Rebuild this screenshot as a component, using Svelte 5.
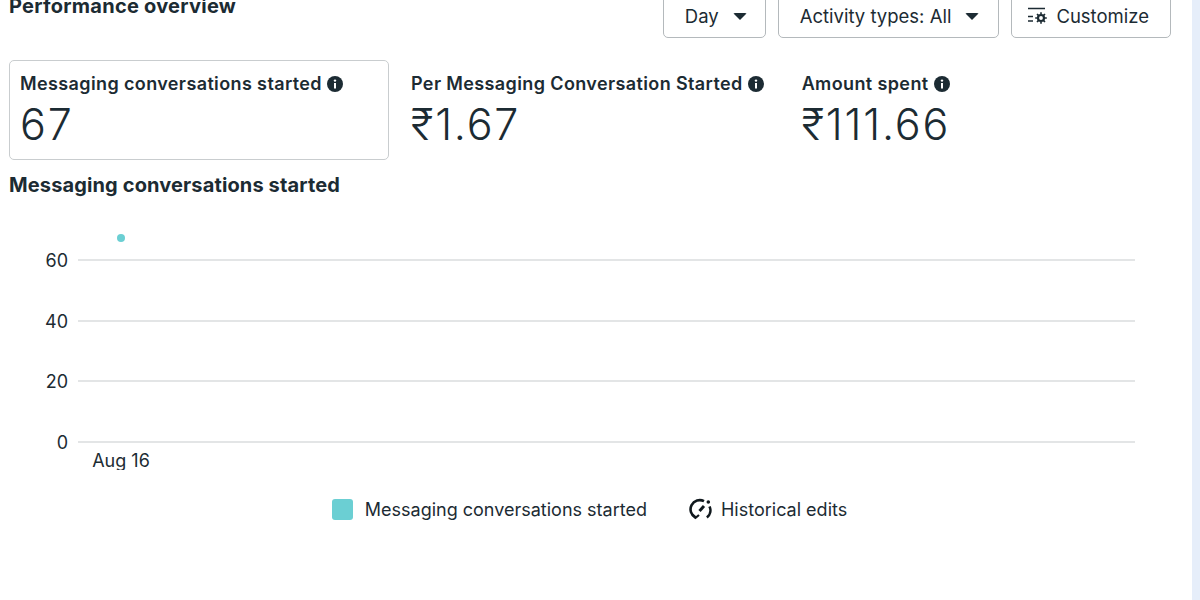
<script lang="ts">
  const metrics = [
    { label: 'Messaging conversations started', value: '67', selected: true },
    { label: 'Per Messaging Conversation Started', value: '₹1.67', selected: false },
    { label: 'Amount spent', value: '₹111.66', selected: false }
  ];

  const ticks = [
    { label: '60', y: 60 },
    { label: '40', y: 121 },
    { label: '20', y: 181 },
    { label: '0', y: 242 }
  ];
</script>

<div class="page">
  <main class="content">
    <header class="top">
      <h2>Performance overview</h2>
      <div class="actions">
        <button class="btn day">Day <span class="caret"></span></button>
        <button class="btn types">Activity types: All <span class="caret"></span></button>
        <button class="btn custom">
          <svg width="20" height="18" viewBox="0 0 20 18" fill="none" stroke="#1c2b33">
            <path d="M1 1.5h17M1 9.5h5M1 14h5" stroke-width="1.3" />
            <circle cx="14" cy="11" r="3" stroke-width="2.2" />
            <path d="M14 5.2v2M14 14.8v2M8.2 11h2M17.8 11h2M10 7l1.4 1.4M16.6 13.6l1.4 1.4M10 15l1.4-1.4M16.6 8.4L18 7" stroke-width="1.6" />
          </svg>
          Customize
        </button>
      </div>
    </header>

    <section class="metrics">
      {#each metrics as m}
        <div class="metric" class:selected={m.selected}>
          <div class="label">
            {m.label}
            <svg class="info" width="16" height="16" viewBox="0 0 16 16">
              <circle cx="8" cy="8" r="8" fill="#1c2b33" />
              <rect x="7" y="7" width="2" height="5.5" fill="#fff" />
              <circle cx="8" cy="4.6" r="1.2" fill="#fff" />
            </svg>
          </div>
          <div class="value">{m.value}</div>
        </div>
      {/each}
    </section>

    <h3>Messaging conversations started</h3>

    <svg class="chart" width="1183" height="270" viewBox="0 0 1183 270">
      {#each ticks as t}
        <line x1="78" x2="1135" y1={t.y} y2={t.y} stroke="#c8cbcd" stroke-width="1.2" />
        <text x="68" y={t.y + 7} text-anchor="end">{t.label}</text>
      {/each}
      <circle cx="121" cy="38" r="4" fill="#6bcfd3" />
      <text x="121" y="267" text-anchor="middle">Aug 16</text>
    </svg>

    <footer class="legend">
      <span class="item first"><span class="swatch"></span>Messaging conversations started</span>
      <span class="item">
        <svg width="24" height="24" viewBox="0 0 24 24" fill="none" stroke="#10181d" stroke-width="2.6">
          <path d="M6.5 20.5A9 9 0 0 1 15 4.2" />
          <path d="M20.5 9.5a9 9 0 0 1-2.6 11" />
          <path d="M3.4 17.4l3.2 3.4 3.4-2.8" stroke-width="2.2" />
          <path d="M10.5 14l4.5-5" stroke-width="3" />
          <circle cx="19.3" cy="5" r="1.8" fill="#10181d" stroke="none" />
        </svg>
        Historical edits
      </span>
    </footer>
  </main>
  <aside class="strip"></aside>
</div>

<style>
  :global(body) {
    background: #fff;
    overflow: hidden;
  }

  .page {
    display: flex;
    height: 600px;
    overflow: hidden;
    font-family: Inter, "Liberation Sans", sans-serif;
    color: #1c2b33;
  }

  .content {
    flex: 1;
    min-width: 0;
    margin-top: -8px;
    padding-left: 9px;
  }

  .strip {
    width: 8px;
    background: #e6eefa;
  }

  .top {
    display: flex;
    justify-content: space-between;
    height: 68px;
    padding-right: 21px;
  }

  h2 {
    margin: 3px 0 0;
    font-size: 20px;
    line-height: 22px;
    font-weight: 700;
    letter-spacing: 0.25px;
  }

  .actions {
    display: flex;
    gap: 12px;
    height: 44px;
    margin-top: 2px;
  }

  .btn {
    display: flex;
    align-items: center;
    gap: 14px;
    padding: 0 18px 0 21px;
    border: 1px solid #b4b9bc;
    border-radius: 5px;
    background: #fff;
    color: #1c2b33;
    font: inherit;
    font-size: 18.5px;
  }

  .types {
    padding: 0 19px 0 21px;
  }

  .custom {
    gap: 9px;
    padding: 0 21px 0 15px;
  }

  .caret {
    width: 0;
    height: 0;
    border: 7px solid transparent;
    border-top: 7px solid #1c2b33;
    border-bottom: 0;
    border-radius: 2px;
  }

  .metrics {
    display: flex;
    height: 100px;
  }

  .metric {
    box-sizing: border-box;
    padding: 13px 0 0 22px;
    margin-right: 16px;
  }

  .metric.selected {
    width: 380px;
    margin-right: 0;
    padding: 12px 0 0 10px;
    border: 1px solid #c9cdcf;
    border-radius: 5px;
  }

  .label {
    display: flex;
    align-items: center;
    gap: 5px;
    font-size: 18px;
    line-height: 22px;
    font-weight: 600;
    letter-spacing: 0.38px;
    white-space: nowrap;
  }

  .value {
    margin-top: 4px;
    font-size: 43px;
    line-height: 50px;
    font-weight: 300;
    letter-spacing: 1.8px;
  }

  h3 {
    margin: 12px 0 0;
    font-size: 20px;
    line-height: 26px;
    font-weight: 700;
    letter-spacing: 0.13px;
  }

  .chart {
    display: block;
    margin: 2px 0 0 -9px;
  }

  .chart text {
    font-size: 18px;
    fill: #1c2b33;
  }

  .legend {
    display: flex;
    justify-content: center;
    align-items: center;
    gap: 42px;
    margin-top: 27px;
    padding-right: 22px;
    font-size: 18px;
  }

  .item {
    display: flex;
    align-items: center;
    gap: 8px;
  }

  .item.first {
    gap: 12px;
  }

  .swatch {
    width: 21px;
    height: 21px;
    border-radius: 3px;
    background: #6bcfd3;
  }
</style>
